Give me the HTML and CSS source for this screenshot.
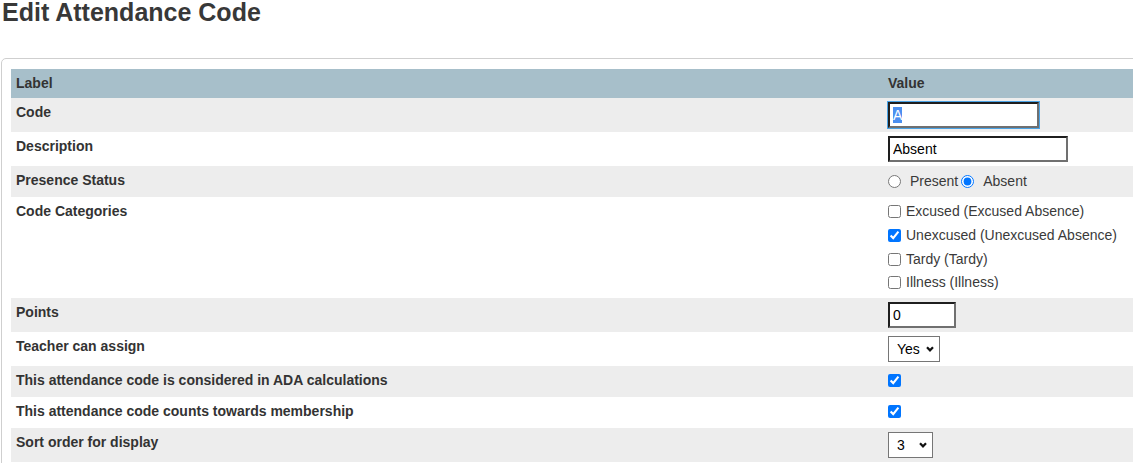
FILE: index.html
```html
<!DOCTYPE html>
<html lang="en">
<head>
<meta charset="utf-8">
<title>Edit Attendance Code</title>
<link rel="stylesheet" href="styles.css">
</head>
<body>
<h1 class="title">Edit Attendance Code</h1>
<div class="panel">
  <table class="grid">
    <colgroup><col class="col-label"><col class="col-value"></colgroup>
    <thead>
      <tr><th>Label</th><th>Value</th></tr>
    </thead>
    <tbody>
      <tr class="alt">
        <td class="lbl">Code</td>
        <td class="val"><input id="code" class="text-input code-input" type="text" value="A"></td>
      </tr>
      <tr>
        <td class="lbl">Description</td>
        <td class="val"><input class="text-input desc-input" type="text" value="Absent"></td>
      </tr>
      <tr class="alt">
        <td class="lbl">Presence Status</td>
        <td class="val val-line">
          <div class="radio-group">
            <input class="radio first" type="radio" name="presence" id="p1"><label class="radio-label" for="p1">Present</label>
            <input class="radio" type="radio" name="presence" id="p2" checked><label class="radio-label" for="p2">Absent</label>
          </div>
        </td>
      </tr>
      <tr>
        <td class="lbl">Code Categories</td>
        <td class="val val-list">
          <label class="check-item"><input class="check" type="checkbox"><span>Excused (Excused Absence)</span></label>
          <label class="check-item"><input class="check" type="checkbox" checked><span>Unexcused (Unexcused Absence)</span></label>
          <label class="check-item"><input class="check" type="checkbox"><span>Tardy (Tardy)</span></label>
          <label class="check-item"><input class="check" type="checkbox"><span>Illness (Illness)</span></label>
        </td>
      </tr>
      <tr class="alt">
        <td class="lbl">Points</td>
        <td class="val"><input class="text-input points-input" type="text" value="0"></td>
      </tr>
      <tr>
        <td class="lbl">Teacher can assign</td>
        <td class="val">
          <span class="select-wrap">
            <select class="select select-yes"><option>Yes</option><option>No</option></select>
            <svg class="chevron" viewBox="0 0 8 6" width="8" height="6"><path d="M1 1.2 L4 4.3 L7 1.2" fill="none" stroke="#111" stroke-width="2.2"/></svg>
          </span>
        </td>
      </tr>
      <tr class="alt">
        <td class="lbl">This attendance code is considered in ADA calculations</td>
        <td class="val val-check"><input class="check solo" type="checkbox" checked></td>
      </tr>
      <tr>
        <td class="lbl">This attendance code counts towards membership</td>
        <td class="val val-check"><input class="check solo" type="checkbox" checked></td>
      </tr>
      <tr class="alt">
        <td class="lbl">Sort order for display</td>
        <td class="val">
          <span class="select-wrap">
            <select class="select select-sort"><option>1</option><option>2</option><option selected>3</option></select>
            <svg class="chevron" viewBox="0 0 8 6" width="8" height="6"><path d="M1 1.2 L4 4.3 L7 1.2" fill="none" stroke="#111" stroke-width="2.2"/></svg>
          </span>
        </td>
      </tr>
    </tbody>
  </table>
</div>
<script src="script.js"></script>
</body>
</html>
```

FILE: styles.css
```css
html { overflow: hidden; }
body {
  margin: 0;
  font-family: "Liberation Sans", Arial, sans-serif;
  color: #333;
  background: #fff;
}
.title {
  margin: 0 0 33px 2px;
  font-size: 25px;
  line-height: 25px;
  font-weight: bold;
  color: #383838;
}
.panel {
  margin-left: 1px;
  width: 1180px;
  border: 1px solid #cfcfcf;
  border-radius: 5px;
  padding: 10px 9px 40px;
}
.grid {
  width: 1160px;
  border-collapse: collapse;
  table-layout: fixed;
  font-size: 14px;
}
.col-label { width: 872px; }
.grid th {
  background: #a7bfca;
  text-align: left;
  font-weight: bold;
  padding: 7px 5px;
  line-height: 15px;
  color: #333;
}
.grid tr.alt td { background: #ededed; }
.lbl {
  font-weight: bold;
  padding: 7px 5px 9px;
  line-height: 15px;
  vertical-align: top;
}
.val {
  padding: 4px 5px;
  vertical-align: top;
  line-height: 15px;
}
.val-line { padding: 8px 5px; }
.val-check { padding: 8px 5px; }
.val-list { padding: 3px 5px 3px; }

.text-input {
  display: block;
  box-sizing: border-box;
  height: 26px;
  padding: 1px 3px;
  border-style: solid;
  border-width: 2px;
  border-color: #1e1e1e #707070 #707070 #1e1e1e;
  font-family: "Liberation Sans", Arial, sans-serif;
  font-size: 14px;
  color: #000;
  background: #fff;
  border-radius: 0;
}
.text-input:focus { outline: none; }
.code-input { width: 151px; outline: 1px solid #4aa3e6; }
.code-input:focus { outline: 1px solid #4aa3e6; }
.code-input::selection { background: #4b8ff0; color: #fff; }
.desc-input { width: 180px; }
.points-input { width: 68px; }

.radio-group {
  display: flex;
  align-items: center;
  height: 15px;
  color: #3a3a3a;
}
.radio {
  margin: 0 0 0 3px;
  width: 13px;
  height: 13px;
}
.radio.first { margin-left: 0; }
.radio-label { margin-left: 9px; font-size: 14px; }

.check-item {
  display: flex;
  align-items: center;
  height: 23.7px;
  font-size: 14px;
  color: #3a3a3a;
}
.check {
  margin: 0;
  width: 13px;
  height: 13px;
}
.check-item span { margin-left: 5px; }
.check.solo { display: block; }

.select-wrap {
  position: relative;
  display: inline-block;
  vertical-align: top;
}
.select {
  display: block;
  appearance: none;
  -webkit-appearance: none;
  box-sizing: border-box;
  height: 26px;
  padding: 0 0 0 8px;
  border: 1px solid #767676;
  border-radius: 0;
  background: #fff;
  font-family: "Liberation Sans", Arial, sans-serif;
  font-size: 14px;
  color: #000;
}
.select-yes { width: 52px; }
.select-sort { width: 45px; }
.chevron {
  position: absolute;
  right: 6px;
  top: 10px;
  pointer-events: none;
}
```

FILE: script.js
```js
var code = document.getElementById('code');
code.focus();
code.select();
```
